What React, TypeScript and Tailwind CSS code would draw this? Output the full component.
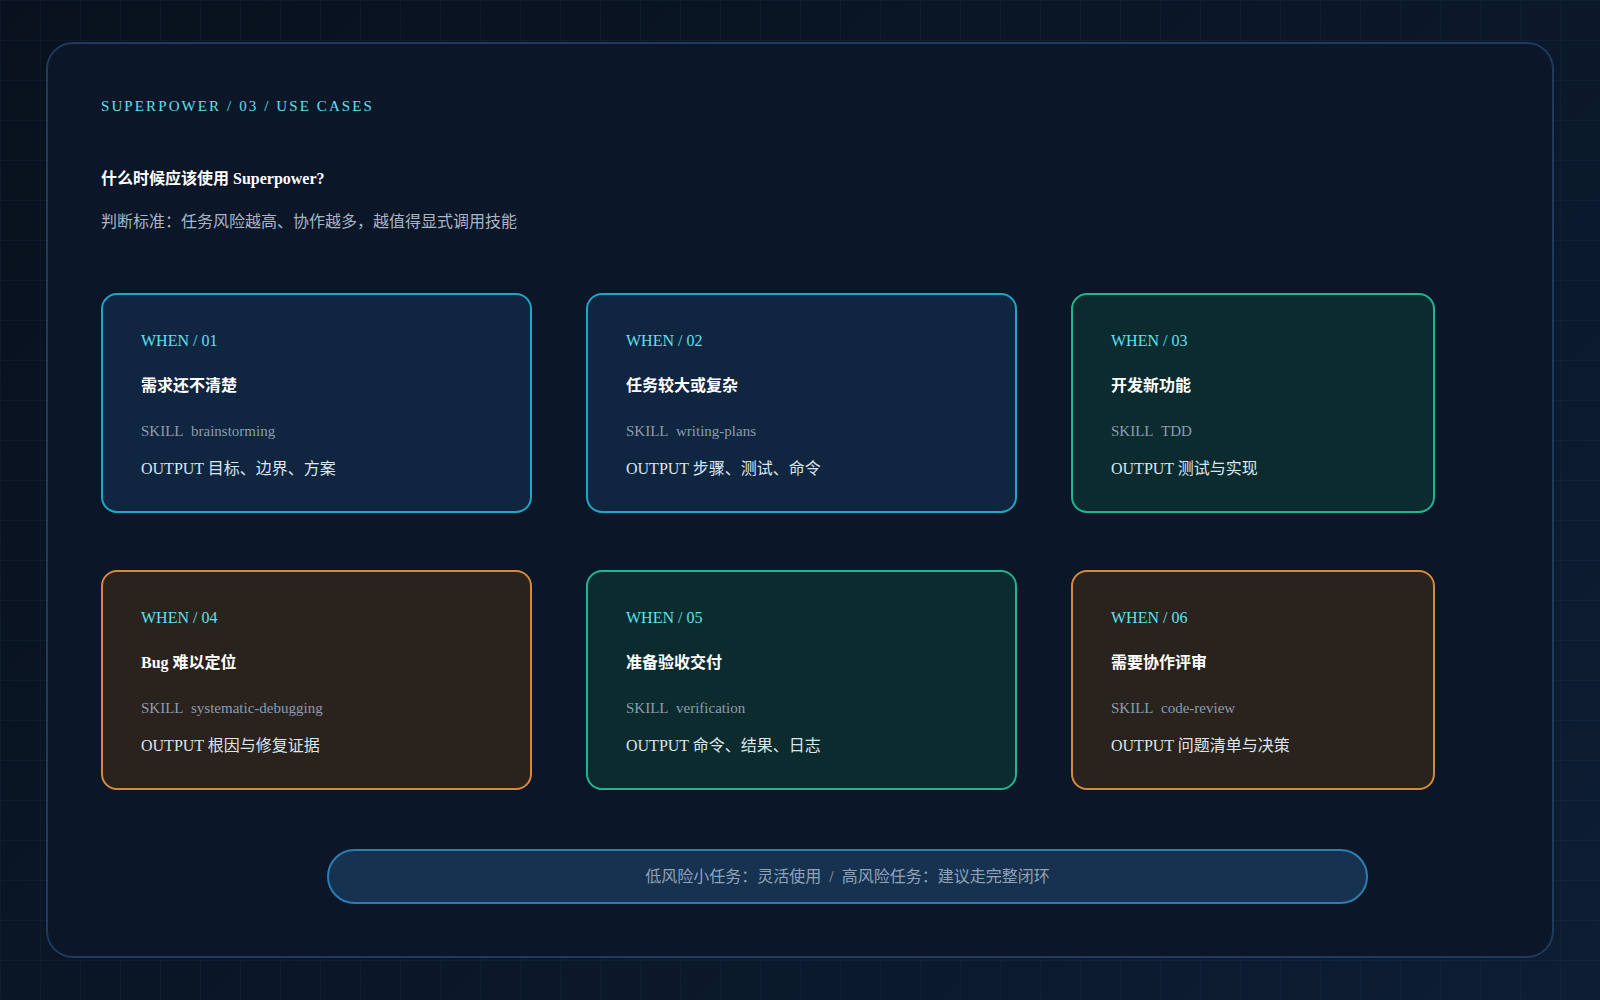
const cards = [
  { n: "01", t: "需求还不清楚", s: "brainstorming", o: "目标、边界、方案", c: "b" },
  { n: "02", t: "任务较大或复杂", s: "writing-plans", o: "步骤、测试、命令", c: "b" },
  { n: "03", t: "开发新功能", s: "TDD", o: "测试与实现", c: "g" },
  { n: "04", t: "Bug 难以定位", s: "systematic-debugging", o: "根因与修复证据", c: "o" },
  { n: "05", t: "准备验收交付", s: "verification", o: "命令、结果、日志", c: "g" },
  { n: "06", t: "需要协作评审", s: "code-review", o: "问题清单与决策", c: "o" },
];
const cls: Record<string, string> = {
  b: "bg-[#0f2540] border-[#1ea5c8]",
  g: "bg-[#0b2b2e] border-[#1fb58f]",
  o: "bg-[#2a221c] border-[#d48a3a]",
};
const widths = ["w-[431px]", "w-[431px]", "w-[364px]"];

function Card({ d, i }: { d: (typeof cards)[0]; i: number }) {
  return (
    <div className={`${widths[i % 3]} h-[220px] rounded-[16px] border-2 ${cls[d.c]} pl-[38px] pt-[36px] flex flex-col`}>
      <div className="text-[16px] leading-[20px] text-[#5ee0ee]">WHEN / {d.n}</div>
      <div className="mt-[25px] text-[16px] leading-[20px] font-bold text-white">{d.t}</div>
      <div className="mt-[25px] text-[15px] leading-[20px] text-[#8c9cb2]">SKILL&nbsp;&nbsp;{d.s}</div>
      <div className="mt-[18px] text-[16px] leading-[20px] text-[#dde5ee]">OUTPUT {d.o}</div>
    </div>
  );
}

export default function App() {
  return (
    <div
      className="w-[1600px] h-[1000px] bg-[#09131f] pt-[42px] pl-[46px]"
      style={{
        fontFamily: '"Liberation Serif", "Noto Sans CJK SC", serif',
        backgroundImage:
          "linear-gradient(rgba(40,70,100,0.15) 1px, transparent 1px), linear-gradient(90deg, rgba(40,70,100,0.15) 1px, transparent 1px), linear-gradient(135deg,#08111d,#0d1d33)",
        backgroundSize: "40px 40px, 40px 40px, 100% 100%",
      }}
    >
      <div className="w-[1508px] h-[916px] rounded-[27px] border-2 border-[#1f3a5c] bg-[#0b1628] pl-[53px] pt-[52px]">
        <div className="text-[15px] leading-[20px] tracking-[0.14em] text-[#5ee0ee]">SUPERPOWER / 03 / USE CASES</div>
        <div className="mt-[53px] text-[16px] leading-[20px] font-bold text-white">什么时候应该使用 Superpower?</div>
        <div className="mt-[23px] text-[16px] leading-[20px] text-[#a9b5c5]">判断标准：任务风险越高、协作越多，越值得显式调用技能</div>
        <div className="mt-[61px] flex flex-col gap-[57px]">
          {[0, 3].map((r) => (
            <div key={r} className="flex gap-[54px]">
              {cards.slice(r, r + 3).map((d, i) => (
                <Card key={d.n} d={d} i={i} />
              ))}
            </div>
          ))}
        </div>
        <div className="mt-[59px] ml-[226px] w-[1041px] h-[55px] rounded-full border-2 border-[#2b7fb0] bg-[#163250] flex items-center justify-center text-[16px] text-[#8fa3b8]">
          低风险小任务：灵活使用&nbsp;&nbsp;/&nbsp;&nbsp;高风险任务：建议走完整闭环
        </div>
      </div>
    </div>
  );
}
